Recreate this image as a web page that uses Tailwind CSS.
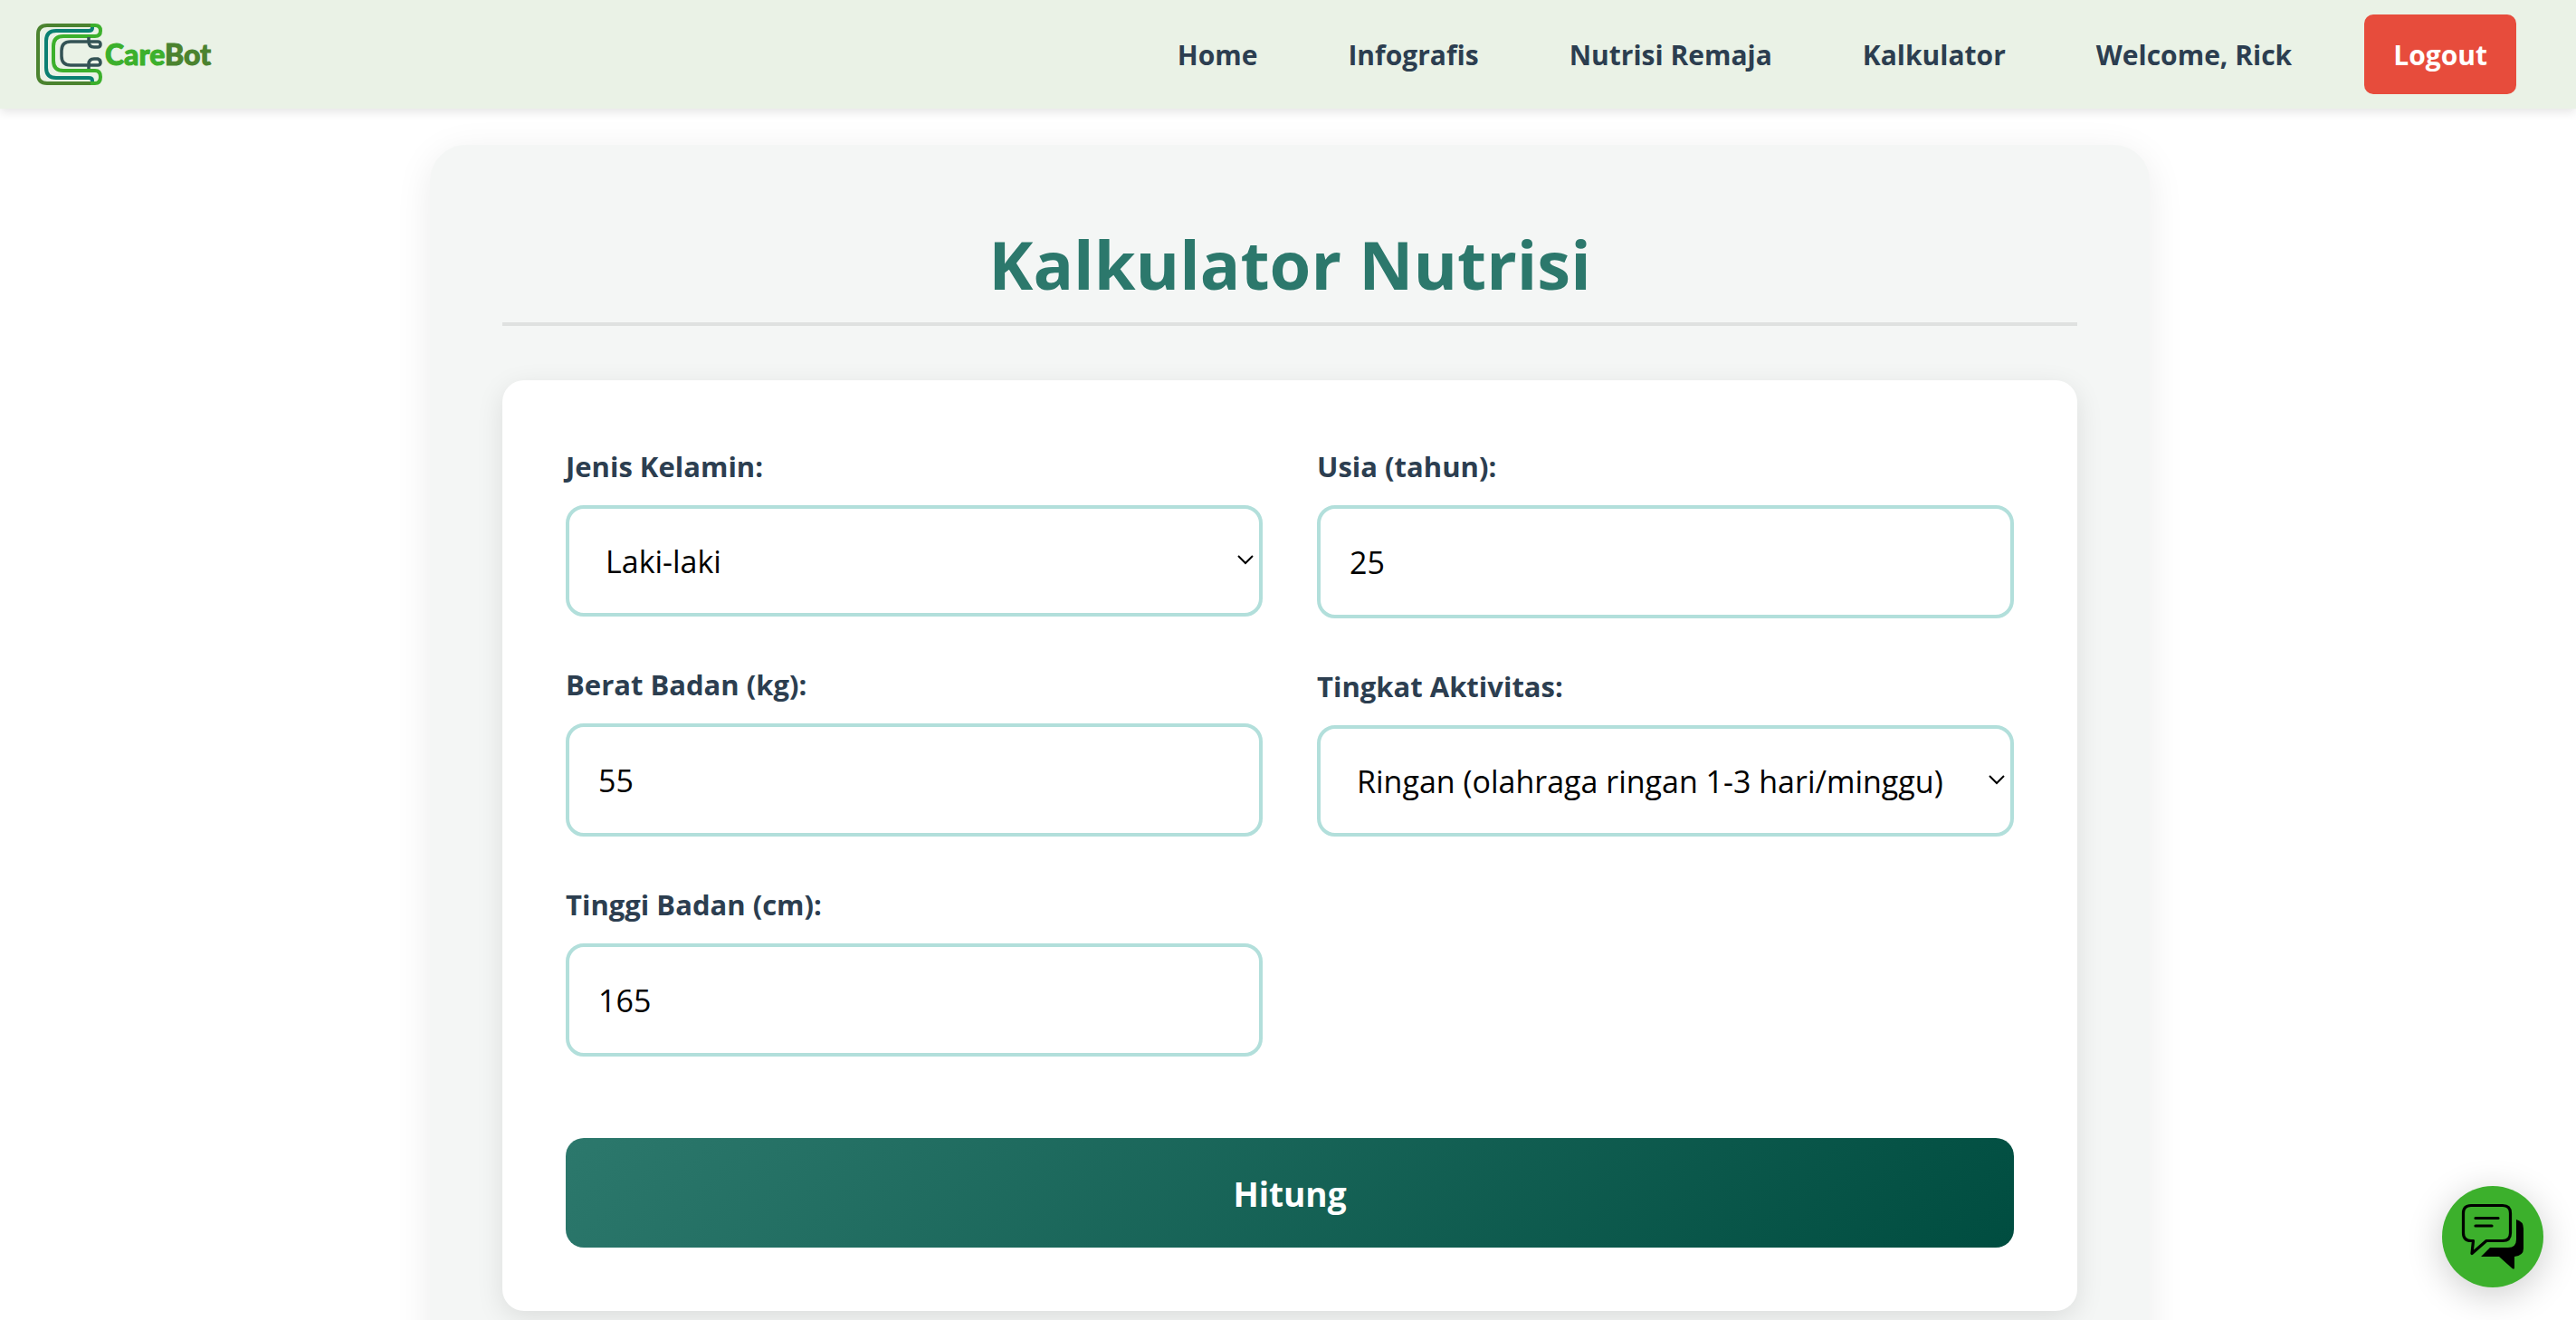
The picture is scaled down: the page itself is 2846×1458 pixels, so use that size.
<!DOCTYPE html>
<html lang="id" class="[scrollbar-width:none]">
<head>
<meta charset="utf-8">
<title>CareBot - Kalkulator Nutrisi</title>
<meta name="viewport" content="width=device-width, initial-scale=1">
<script src="https://cdn.jsdelivr.net/npm/@tailwindcss/browser@4"></script>
</head>
<body class="bg-white font-['Open_Sans','Noto_Sans',sans-serif] text-[#2c3e50]">
<header class="relative z-10 flex h-[120px] items-center justify-between bg-[#eaf2e6] pl-10 pr-[66px] shadow-[0_4px_10px_rgba(0,0,0,0.1)]">
  <a href="#" aria-label="CareBot" class="flex items-center">
    <svg class="h-[68px] w-[74px]" viewBox="0 0 74 68" fill="none" stroke-width="4" aria-hidden="true">
      <path d="M61 2H12Q2 2 2 12V56Q2 66 12 66H61" stroke="#4b832f"/>
      <path d="M62 3V5Q62 8 58 8H22Q11 8 11 19V49Q11 60 22 60H58Q62 60 62 63V65" stroke="#0a8072"/>
      <path d="M60 2H65Q71 2 71 8T65 14H30Q19 14 19 25V41Q19 52 30 52H65Q71 52 71 59T65 66H60" stroke="#3cb02c"/>
      <path d="M58 15V20Q58 26 64 26H68Q71 26 71 23T68 20H38Q28 20 28 30V36Q28 46 38 46H68Q71 46 71 43T68 39H64Q58 39 58 45V50" stroke="#345355" stroke-width="3.500"/>
    </svg>
    <span class="ml-0.5 font-[Lato,sans-serif] text-[32px] font-black leading-10 text-[#3cb02c] [-webkit-text-stroke:1px]">Care<span class="text-[#4b832f]">Bot</span></span>
  </a>
  <nav class="flex items-center text-[30px] font-bold leading-[48px]">
    <a href="#" class="mr-[100px] pt-0.5">Home</a>
    <a href="#" class="mr-[100px] pt-0.5">Infografis</a>
    <a href="#" class="mr-[100px] pt-0.5">Nutrisi Remaja</a>
    <a href="#" class="mr-[100px] pt-0.5">Kalkulator</a>
    <span class="mr-20 pt-0.5">Welcome, Rick</span>
    <button type="button" class="h-[88px] rounded-[10px] bg-[#e74c3c] px-8 pt-0.5 text-white">Logout</button>
  </nav>
</header>
<div class="pb-20 pl-1 pt-10">
<main class="mx-auto max-w-[1900px] rounded-[40px] bg-[#f4f6f5] p-20 shadow-[0_8px_40px_rgba(0,0,0,0.08)]">
  <h1 class="border-b-4 border-[#dfe1e0] pb-3 text-center text-[74px] font-bold leading-[104px] text-[#2c786c]">Kalkulator Nutrisi</h1>
  <form class="mt-[60px] rounded-[24px] bg-white p-[70px] shadow-[0_8px_30px_rgba(0,0,0,0.1)]">
    <div class="grid grid-cols-2 gap-x-[60px]">
      <div class="flex flex-col gap-[50px]">
        <div class="flex flex-col gap-[18px]"><label for="jk" class="text-[31px] font-bold leading-[50px]">Jenis Kelamin:</label>
          <div class="relative"><select id="jk" class="block h-[123px] w-full appearance-none rounded-[20px] border-4 border-[#b2dfdb] bg-white px-10 pt-0.5 text-[34px] text-black"><option>Laki-laki</option><option>Perempuan</option></select>
          <svg class="pointer-events-none absolute right-[9px] top-[54px] h-4 w-5" viewBox="0 0 20 16" fill="none" stroke="#000" stroke-width="2" aria-hidden="true"><path d="M2 2l8 8 8-8"/></svg></div></div>
        <div class="flex flex-col gap-[18px]"><label for="bb" class="text-[31px] font-bold leading-[50px]">Berat Badan (kg):</label>
          <input id="bb" type="number" value="55" class="h-[125px] rounded-[20px] border-4 border-[#b2dfdb] bg-white px-8 text-[34px] text-black"></div>
        <div class="flex flex-col gap-[18px]"><label for="tb" class="text-[31px] font-bold leading-[50px]">Tinggi Badan (cm):</label>
          <input id="tb" type="number" value="165" class="h-[125px] rounded-[20px] border-4 border-[#b2dfdb] bg-white px-8 text-[34px] text-black"></div>
      </div>
      <div class="flex flex-col gap-[50px]">
        <div class="flex flex-col gap-[18px]"><label for="us" class="text-[31px] font-bold leading-[50px]">Usia (tahun):</label>
          <input id="us" type="number" value="25" class="h-[125px] rounded-[20px] border-4 border-[#b2dfdb] bg-white px-8 text-[34px] text-black"></div>
        <div class="flex flex-col gap-[18px]"><label for="ta" class="text-[31px] font-bold leading-[50px]">Tingkat Aktivitas:</label>
          <div class="relative"><select id="ta" class="block h-[123px] w-full appearance-none rounded-[20px] border-4 border-[#b2dfdb] bg-white px-10 pt-0.5 text-[34px] text-black"><option>Ringan (olahraga ringan 1-3 hari/minggu)</option></select>
          <svg class="pointer-events-none absolute right-[9px] top-[54px] h-4 w-5" viewBox="0 0 20 16" fill="none" stroke="#000" stroke-width="2" aria-hidden="true"><path d="M2 2l8 8 8-8"/></svg></div></div>
      </div>
    </div>
    <button type="button" class="mt-[90px] block h-[121px] w-full rounded-[20px] bg-[linear-gradient(135deg,#2c786c,#004d40)] pt-0.5 text-[37px] font-bold text-white">Hitung</button>
  </form>
</main>
</div>
<button type="button" aria-label="Buka chat" class="fixed bottom-9 right-9 z-20 size-28 rounded-full bg-[#3cb02c] shadow-[0_8px_40px_rgba(0,0,0,0.2)]">
  <svg class="size-full" viewBox="0 0 112 112" aria-hidden="true">
    <path d="M32 21.500H67Q75.500 21.500 75.500 30V52Q75.500 60.500 67 60.500H49L33 74.500L34.500 60.500H32Q23.500 60.500 23.500 52V30Q23.500 21.500 32 21.500Z" fill="none" stroke="#000" stroke-width="3.200" stroke-linejoin="round"/>
    <path d="M37 35.500H62M37 44H55" stroke="#000" stroke-width="3.200" stroke-linecap="round"/>
    <path d="M82 37Q90 39 90 47V69Q90 77 80 78V90Q80 93 77.500 91L63 78H43L53 68H73Q82 68 82 59Z"/>
  </svg>
</button>
</body>
</html>
